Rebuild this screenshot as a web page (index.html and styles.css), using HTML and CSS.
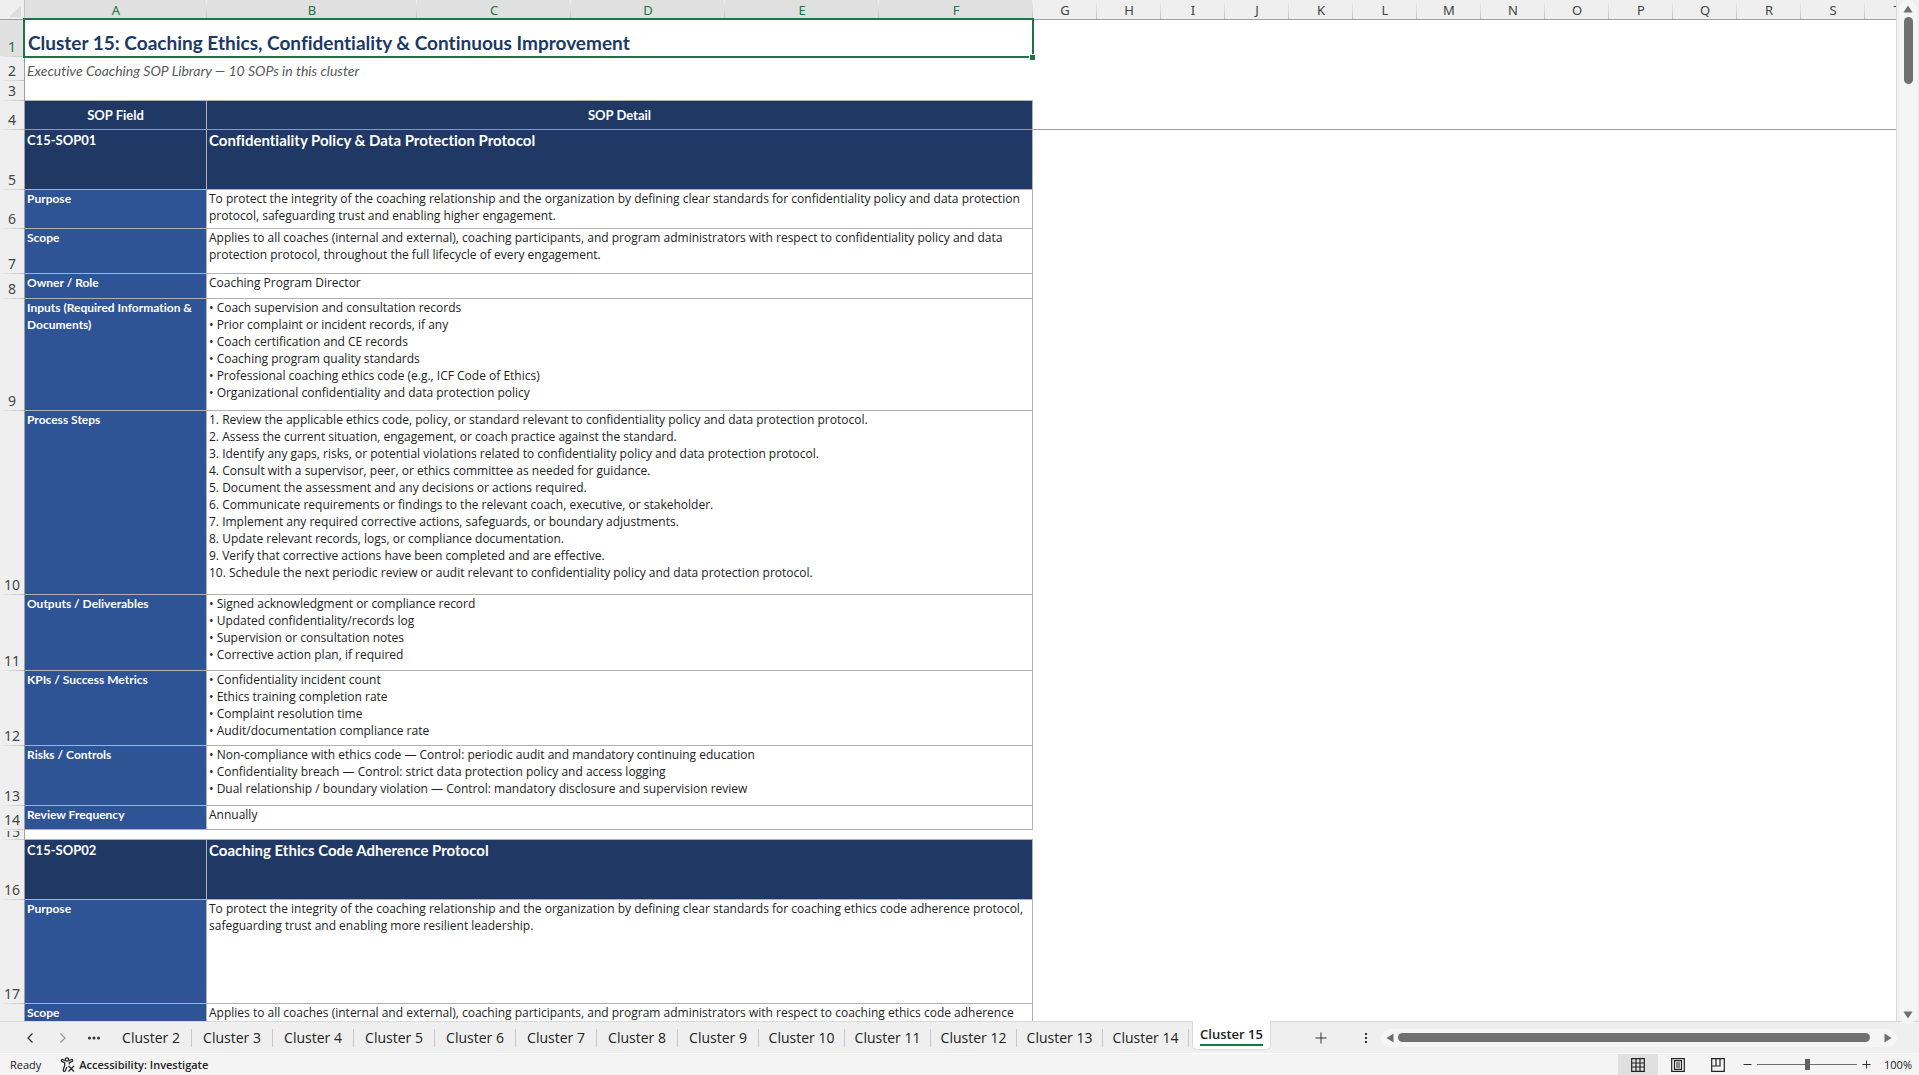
FILE: index.html
```
<!DOCTYPE html>
<html lang="en">
<head>
  <meta charset="UTF-8" />
  <meta name="viewport" content="width=device-width, initial-scale=1.0"/>
  <title>Cluster 15 - Coaching SOP Library</title>
  <link rel="stylesheet" href="styles.css">
</head>
<body>
  <div class="workspace">
    <div class="grid">
      <table class="sheet">
        <colgroup>
          <col class="c-num"><col class="c-a"><col class="c-b">
          <col class="c-wide" span="4">
          <col class="c-std" span="14">
        </colgroup>
        <thead>
          <tr>
            <th class="corner"><svg width="12" height="12" viewBox="0 0 12 12"><path d="M12 0V12H0Z" fill="#dcdcdc"/></svg></th>
            <th class="on">A</th><th class="on">B</th><th class="on">C</th><th class="on">D</th><th class="on">E</th><th class="on">F</th>
            <th>G</th><th>H</th><th>I</th><th>J</th><th>K</th><th>L</th><th>M</th><th>N</th><th>O</th><th>P</th><th>Q</th><th>R</th><th>S</th><th>T</th>
          </tr>
        </thead>
        <tbody>
          <tr class="h37"><th class="on">1</th><td class="title" colspan="6">Cluster 15: Coaching Ethics, Confidentiality &amp; Continuous Improvement<span class="selection"></span><span class="handle"></span></td><td colspan="14"></td></tr>
          <tr class="h24"><th>2</th><td class="subtitle" colspan="6">Executive Coaching SOP Library — 10 SOPs in this cluster</td><td colspan="14"></td></tr>
          <tr class="h20"><th>3</th><td class="line" colspan="6"></td><td colspan="14"></td></tr>
          <tr class="h29 frozen"><th>4</th><td class="head">SOP Field</td><td class="head" colspan="5">SOP Detail</td><td colspan="14"></td></tr>

          <tr class="h60"><th>5</th><td class="code">C15-SOP01</td><td class="name" colspan="5">Confidentiality Policy &amp; Data Protection Protocol</td><td colspan="14"></td></tr>
          <tr class="h39"><th>6</th><td class="field">Purpose</td><td class="text" colspan="5">To protect the integrity of the coaching relationship and the organization by defining clear standards for confidentiality policy and data protection protocol, safeguarding trust and enabling higher engagement.</td><td colspan="14"></td></tr>
          <tr class="h45"><th>7</th><td class="field">Scope</td><td class="text" colspan="5">Applies to all coaches (internal and external), coaching participants, and program administrators with respect to confidentiality policy and data protection protocol, throughout the full lifecycle of every engagement.</td><td colspan="14"></td></tr>
          <tr class="h25"><th>8</th><td class="field">Owner / Role</td><td class="text" colspan="5">Coaching Program Director</td><td colspan="14"></td></tr>
          <tr class="h112"><th>9</th><td class="field">Inputs (Required Information &amp; Documents)</td><td class="text" colspan="5">• Coach supervision and consultation records<br>• Prior complaint or incident records, if any<br>• Coach certification and CE records<br>• Coaching program quality standards<br>• Professional coaching ethics code (e.g., ICF Code of Ethics)<br>• Organizational confidentiality and data protection policy</td><td colspan="14"></td></tr>
          <tr class="h184"><th>10</th><td class="field">Process Steps</td><td class="text" colspan="5">1. Review the applicable ethics code, policy, or standard relevant to confidentiality policy and data protection protocol.<br>2. Assess the current situation, engagement, or coach practice against the standard.<br>3. Identify any gaps, risks, or potential violations related to confidentiality policy and data protection protocol.<br>4. Consult with a supervisor, peer, or ethics committee as needed for guidance.<br>5. Document the assessment and any decisions or actions required.<br>6. Communicate requirements or findings to the relevant coach, executive, or stakeholder.<br>7. Implement any required corrective actions, safeguards, or boundary adjustments.<br>8. Update relevant records, logs, or compliance documentation.<br>9. Verify that corrective actions have been completed and are effective.<br>10. Schedule the next periodic review or audit relevant to confidentiality policy and data protection protocol.</td><td colspan="14"></td></tr>
          <tr class="h76"><th>11</th><td class="field">Outputs / Deliverables</td><td class="text" colspan="5">• Signed acknowledgment or compliance record<br>• Updated confidentiality/records log<br>• Supervision or consultation notes<br>• Corrective action plan, if required</td><td colspan="14"></td></tr>
          <tr class="h75"><th>12</th><td class="field">KPIs / Success Metrics</td><td class="text" colspan="5">• Confidentiality incident count<br>• Ethics training completion rate<br>• Complaint resolution time<br>• Audit/documentation compliance rate</td><td colspan="14"></td></tr>
          <tr class="h60"><th>13</th><td class="field">Risks / Controls</td><td class="text" colspan="5">• Non-compliance with ethics code — Control: periodic audit and mandatory continuing education<br>• Confidentiality breach — Control: strict data protection policy and access logging<br>• Dual relationship / boundary violation — Control: mandatory disclosure and supervision review</td><td colspan="14"></td></tr>
          <tr class="h24"><th>14</th><td class="field">Review Frequency</td><td class="text" colspan="5">Annually</td><td colspan="14"></td></tr>
          <tr class="h10"><th><div class="cut">15</div></th><td class="line" colspan="6"></td><td colspan="14"></td></tr>

          <tr class="h60"><th>16</th><td class="code">C15-SOP02</td><td class="name" colspan="5">Coaching Ethics Code Adherence Protocol</td><td colspan="14"></td></tr>
          <tr class="h104"><th>17</th><td class="field">Purpose</td><td class="text" colspan="5">To protect the integrity of the coaching relationship and the organization by defining clear standards for coaching ethics code adherence protocol, safeguarding trust and enabling more resilient leadership.</td><td colspan="14"></td></tr>
          <tr class="h25"><th></th><td class="field">Scope</td><td class="text" colspan="5">Applies to all coaches (internal and external), coaching participants, and program administrators with respect to coaching ethics code adherence</td><td colspan="14"></td></tr>
        </tbody>
      </table>
    </div>
    <div class="vscroll">
      <button class="arrow" aria-label="Scroll up"><svg width="10" height="8" viewBox="0 0 10 8"><path d="M5 0.5L9.5 7.5H0.5Z"/></svg></button>
      <div class="vthumb"></div>
      <button class="arrow" aria-label="Scroll down"><svg width="10" height="8" viewBox="0 0 10 8"><path d="M5 7.5L9.5 0.5H0.5Z"/></svg></button>
    </div>
  </div>

  <div class="tabbar">
    <div class="tabnav">
      <button aria-label="Previous sheet"><svg width="14" height="14" viewBox="0 0 14 14"><path d="M9.5 2.5L5 7L9.5 11.5"/></svg></button>
      <button class="off" aria-label="Next sheet"><svg width="14" height="14" viewBox="0 0 14 14"><path d="M4.500 2.5L9 7L4.500 11.5"/></svg></button>
      <button class="dots" aria-label="More sheets"><svg width="14" height="14" viewBox="0 0 14 14"><circle cx="2.500" cy="7" r="1.500"/><circle cx="7" cy="7" r="1.500"/><circle cx="11.500" cy="7" r="1.500"/></svg></button>
    </div>
    <div class="tabs">
      <button class="tab">Cluster 2</button>
      <button class="tab">Cluster 3</button>
      <button class="tab">Cluster 4</button>
      <button class="tab">Cluster 5</button>
      <button class="tab">Cluster 6</button>
      <button class="tab">Cluster 7</button>
      <button class="tab">Cluster 8</button>
      <button class="tab">Cluster 9</button>
      <button class="tab long">Cluster 10</button>
      <button class="tab long">Cluster 11</button>
      <button class="tab long">Cluster 12</button>
      <button class="tab long">Cluster 13</button>
      <button class="tab long">Cluster 14</button>
      <button class="tab long active"><span class="page"><span class="label">Cluster 15</span></span></button>
    </div>
    <button class="add" aria-label="New sheet"><svg width="12" height="12" viewBox="0 0 12 12"><path d="M6 0.5V11.5M0.5 6H11.5"/></svg></button>
    <div class="grip"><i></i><i></i><i></i></div>
    <div class="hscroll">
      <button class="arrow" aria-label="Scroll left"><svg width="8" height="10" viewBox="0 0 8 10"><path d="M0.5 5L7.500 0.5V9.500Z"/></svg></button>
      <div class="hthumb"></div>
      <button class="arrow" aria-label="Scroll right"><svg width="8" height="10" viewBox="0 0 8 10"><path d="M7.500 5L0.5 0.5V9.500Z"/></svg></button>
    </div>
  </div>

  <div class="status">
    <span class="ready">Ready</span>
    <button class="access">
      <svg width="16" height="16" viewBox="0 0 16 16"><circle cx="7" cy="2.500" r="1.700"/><path d="M5 3.500L2.500 2.500C1.300 2.200 0.800 3.800 1.900 4.400L4.700 5.700V8.500L3.200 13C3 14.500 4.800 15 5.300 13.800L7 10M9 3.500L11.500 2.500C12.700 2.200 13.200 3.800 12.100 4.400L9.300 5.700V7.500M8.500 9L14 14.500M14 9L8.500 14.500"/></svg>
      <span>Accessibility: Investigate</span>
    </button>
    <div class="views">
      <button class="view current" aria-label="Normal"><svg width="14" height="14" viewBox="0 0 14 14"><path d="M0.700 0.700H13.300V13.300H0.700ZM0.700 5H13.300M0.700 9H13.300M5 0.700V13.300M9 0.700V13.300"/></svg></button>
      <button class="view" aria-label="Page layout"><svg width="14" height="14" viewBox="0 0 14 14"><path d="M0.700 0.700H13.300V13.300H0.700ZM3.500 2.700H10.500V11.300H3.500ZM5 5H9M5 7H9M5 9H9"/></svg></button>
      <button class="view" aria-label="Page break preview"><svg width="14" height="14" viewBox="0 0 14 14"><path d="M0.700 0.700H13.300V13.300H0.700ZM0.700 8H9V0.700M5 0.700V8"/></svg></button>
    </div>
    <div class="zoom">
      <button aria-label="Zoom out"><svg width="9" height="9" viewBox="0 0 9 9"><path d="M0.500 4.500H8.500"/></svg></button>
      <input type="range" min="0" max="200" value="100" aria-label="Zoom">
      <button aria-label="Zoom in"><svg width="9" height="9" viewBox="0 0 9 9"><path d="M0.500 4.500H8.500M4.500 0.500V8.500"/></svg></button>
      <button class="percent">100%</button>
    </div>
  </div>
</body>
</html>
```
FILE: styles.css
```
* {
  box-sizing: border-box;
}

body {
  margin: 0;
  height: 100vh;
  display: flex;
  flex-direction: column;
  overflow: hidden;
  background-color: #efefef;
  font-family: "Open Sans", "Noto Sans", sans-serif;
  color: #222;
}

button {
  border: none;
  padding: 0;
  background: none;
  font: inherit;
  color: inherit;
  cursor: pointer;
}

svg {
  display: block;
}

.workspace {
  flex: 1;
  min-height: 0;
  display: flex;
}

.grid {
  flex: 1;
  min-width: 0;
  overflow: hidden;
  background-color: white;
  border-right: 1px solid #dadada;
}

/* sheet */
.sheet {
  table-layout: fixed;
  width: 1929px;
  border-collapse: separate;
  border-spacing: 0;
  font-family: Lato, "Open Sans", sans-serif;
  font-size: 12px;
  line-height: 17px;
  font-variant-ligatures: none;
}

.c-num { width: 25px; }
.c-a { width: 182px; }
.c-b { width: 210px; }
.c-wide { width: 154px; }
.c-std { width: 64px; }

.sheet th {
  padding: 0;
  font-family: "Noto Sans", "Open Sans", sans-serif;
  font-size: 13px;
  font-weight: normal;
  color: #444;
  background-color: #efefef;
}

.sheet thead th {
  height: 20px;
  padding-top: 2px;
  line-height: 17px;
  border-bottom: 1px solid #a0a0a0;
  background-image: linear-gradient(to bottom, #efefef, #c4c4c4);
  background-size: 1px 100%;
  background-position: right;
  background-repeat: no-repeat;
}

.sheet tbody th {
  padding-bottom: 1px;
  vertical-align: bottom;
  font-size: 14px;
  line-height: 18px;
  border-right: 1px solid #a0a0a0;
  background-image: linear-gradient(to right, #efefef, #c4c4c4);
  background-size: 100% 1px;
  background-position: bottom;
  background-repeat: no-repeat;
}

.sheet th.on {
  color: #217346;
  background-color: #e0e0e0;
}

.sheet thead .corner {
  background-image: none;
  border-right: 1px solid #c4c4c4;
}

.corner svg {
  margin: 0 0 0 9px;
}

.sheet td {
  padding: 0 2px;
  vertical-align: top;
}

.h10 { height: 10px; }
.h20 { height: 20px; }
.h24 { height: 24px; }
.h25 { height: 25px; }
.h29 { height: 29px; }
.h37 { height: 37px; }
.h39 { height: 39px; }
.h45 { height: 45px; }
.h60 { height: 60px; }
.h75 { height: 75px; }
.h76 { height: 76px; }
.h104 { height: 104px; }
.h112 { height: 112px; }
.h184 { height: 184px; }

.cut {
  height: 8px;
  line-height: 2px;
  overflow: hidden;
}

.sheet .title {
  position: relative;
  vertical-align: bottom;
  padding: 0 3px 1px;
  font-size: 19px;
  line-height: 26px;
  font-weight: bold;
  color: #203864;
}

.selection {
  position: absolute;
  inset: -2px -1px -1px -2px;
  border: 2px solid #217346;
}

.handle {
  position: absolute;
  right: -3px;
  bottom: -4px;
  width: 7px;
  height: 7px;
  border: 1px solid white;
  background-color: #217346;
}

.sheet .subtitle {
  vertical-align: bottom;
  padding-bottom: 2px;
  font-size: 14px;
  font-style: italic;
  color: #595959;
}

.sheet .line,
.head,
.code,
.name,
.field,
.text {
  border-bottom: 1px solid #b2b2b2;
}

.head,
.code,
.name,
.field,
.text {
  border-right: 1px solid #b2b2b2;
}

.frozen td {
  border-bottom: 1px solid #999;
}

.sheet .head {
  vertical-align: middle;
  text-align: center;
  font-size: 13px;
  font-weight: bold;
  color: white;
  background-color: #203864;
}

.sheet .code,
.sheet .name {
  padding-top: 2px;
  font-size: 13px;
  font-weight: bold;
  color: white;
  background-color: #203864;
}

.sheet .name {
  font-size: 15px;
}

.field {
  font-weight: bold;
  color: white;
  background-color: #2f5496;
}

.text {
  font-family: "Open Sans", "Noto Sans", sans-serif;
}

/* scroll bars */
.vscroll {
  width: 18px;
  margin: 0 2px -3px 2px;
  padding: 5px 0;
  display: flex;
  flex-direction: column;
  align-items: center;
  border-radius: 9px;
  background-color: #f5f5f5;
  z-index: 1;
}

.arrow {
  fill: #6e6e6e;
}

.vthumb {
  width: 9px;
  height: 67px;
  margin-top: 4px;
  margin-bottom: auto;
  border-radius: 5px;
  background-color: #707070;
}

.hscroll {
  flex: 1;
  height: 18px;
  margin-right: 22px;
  padding: 0 5px;
  display: flex;
  align-items: center;
  gap: 4px;
  border-radius: 9px;
  background-color: #f5f5f5;
}

.hthumb {
  flex: 1;
  height: 9px;
  margin-right: 10px;
  border-radius: 5px;
  background-color: #707070;
}

/* sheet tabs */
.tabbar {
  height: 33px;
  display: flex;
  align-items: center;
  border-top: 1px solid #dadada;
  border-bottom: 1px solid white;
  font-size: 14px;
}

.tabnav {
  width: 111px;
  padding-left: 23px;
  display: flex;
  gap: 19px;
  fill: none;
  stroke: #333;
  stroke-width: 1.3;
}

.tabnav .off {
  stroke: #999;
}

.tabnav .dots {
  margin-left: -2px;
  fill: #333;
  stroke: none;
}

.tabs {
  display: flex;
  align-items: center;
}

.tab {
  width: 81px;
  height: 18px;
  line-height: 16px;
  border-right: 1px solid #c8c8c8;
  white-space: nowrap;
}

.tab.long {
  width: 86px;
}

.tab.active {
  height: 32px;
  display: flex;
  align-items: flex-start;
  border: none;
  padding: 0 4px 0 3px;
}

.page {
  flex: 1;
  height: 29px;
  margin-top: -1px;
  padding-top: 5px;
  border: 1px solid #dadada;
  border-top: none;
  border-radius: 0 0 5px 5px;
  background-color: white;
  font-size: 13px;
  font-weight: 600;
}

.label {
  display: inline-block;
  height: 20px;
  border-bottom: 2px solid #107c41;
}

.add {
  margin-left: 40px;
  stroke: #333;
}

.grip {
  width: 2px;
  margin: 0 14px 0 38px;
  display: flex;
  flex-direction: column;
  gap: 2px;
}

.grip i {
  height: 2px;
  background-color: #333;
}

/* status bar */
.status {
  height: 21px;
  display: flex;
  align-items: center;
  background-color: #f4f4f4;
  font-size: 11px;
}

.ready {
  margin-left: 10px;
}

.access {
  margin-left: 19px;
  display: flex;
  align-items: center;
  gap: 3px;
  font-weight: 600;
}

.access svg,
.view svg {
  fill: none;
  stroke: #222;
  stroke-width: 1.2;
}

.views {
  margin-left: auto;
  display: flex;
  align-self: stretch;
}

.view {
  width: 40px;
  display: flex;
  align-items: center;
  justify-content: center;
}

.current {
  background-color: #e0e0e0;
}

.zoom {
  margin-left: 5px;
  padding-right: 7px;
  display: flex;
  align-items: center;
  gap: 5px;
}

.zoom svg {
  stroke: #333;
}

.zoom input {
  appearance: none;
  width: 100px;
  height: 11px;
  margin: 0;
  background: linear-gradient(#707070, #707070) center / 100% 1px no-repeat;
}

.zoom input::-webkit-slider-thumb {
  appearance: none;
  width: 5px;
  height: 11px;
  background-color: #606060;
}

.percent {
  margin-left: 8px;
}
```
